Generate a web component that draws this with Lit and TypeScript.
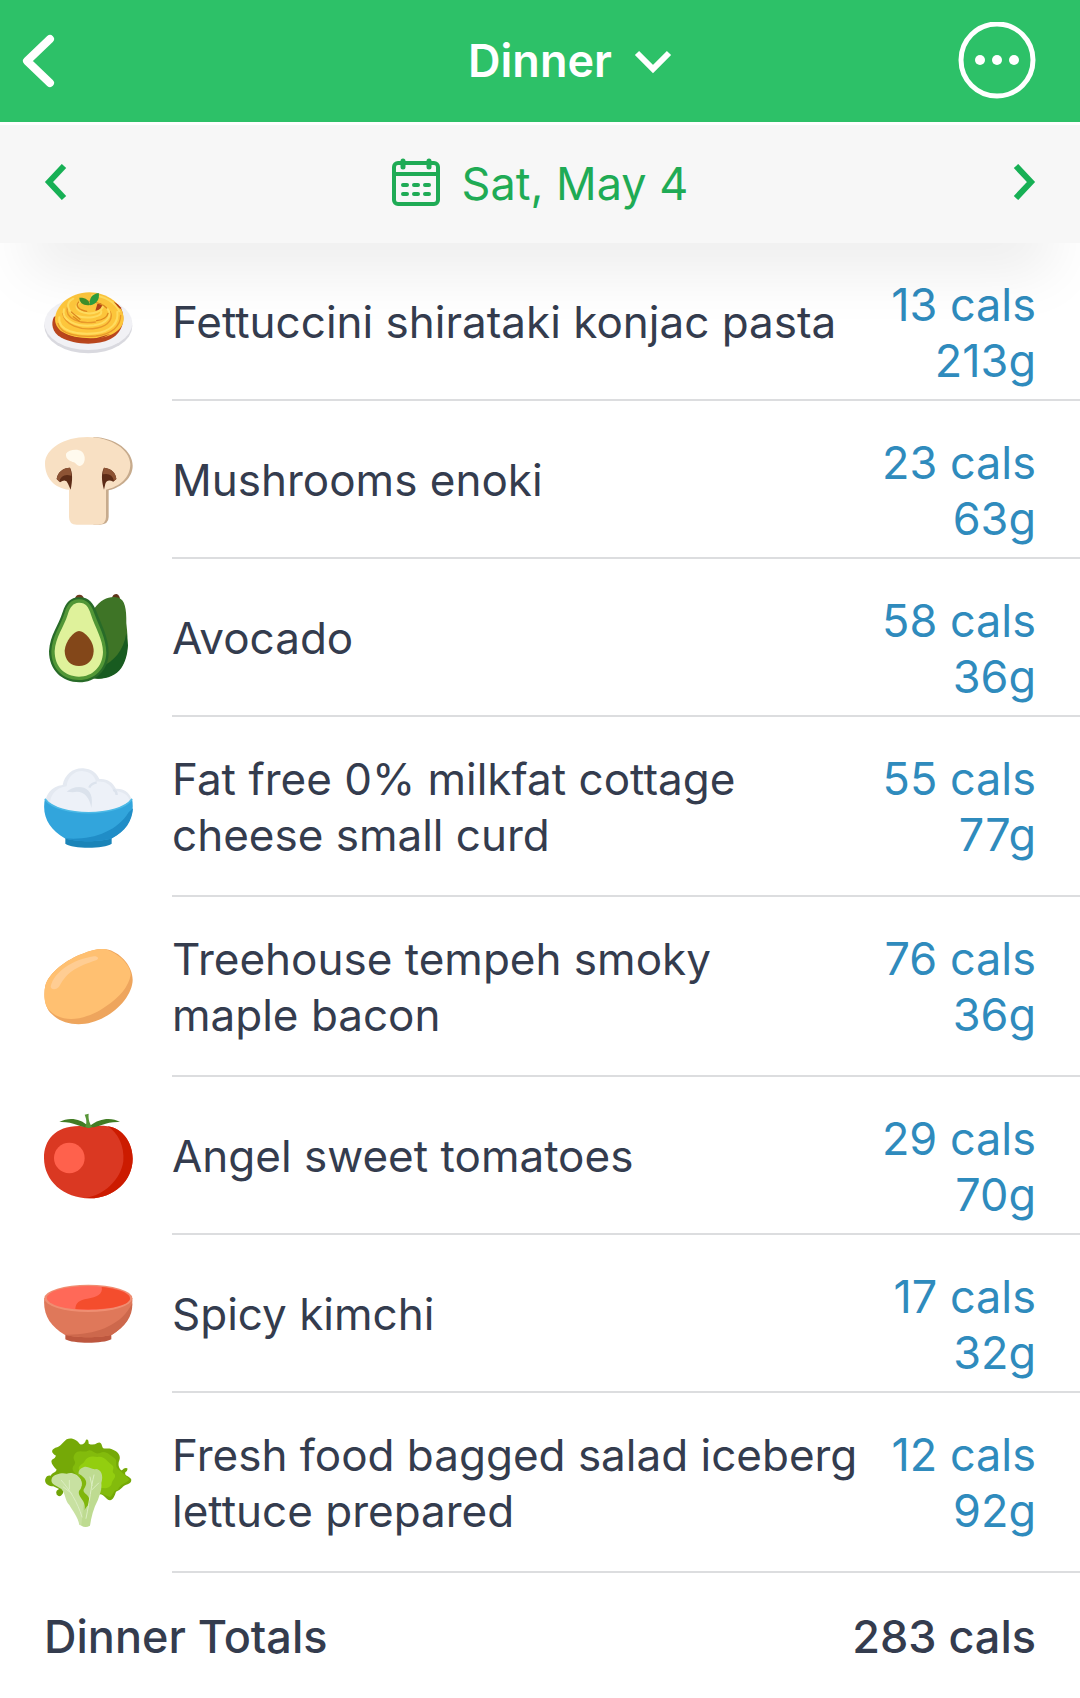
import { LitElement, html, svg, css } from "lit";
import type { SVGTemplateResult } from "lit";
import { customElement, state } from "lit/decorators.js";

interface Food {
  name: string;
  cals: number;
  grams: number;
  icon: Icon;
}

interface Icon {
  box: string;
  art: SVGTemplateResult;
}

const pasta: Icon = {
  box: "42 21 270 270",
  art: svg`
    <ellipse cx="175" cy="168" rx="132" ry="82" fill="#d9d9df"/>
    <ellipse cx="175" cy="160" rx="132" ry="80" fill="#f1f1f5"/>
    <path d="M72 140C62 160 66 186 92 202C130 224 200 228 240 208C276 190 290 150 272 112L250 92Z" fill="#b9461d"/>
    <path d="M75 148C76 108 118 68 178 67C232 67 282 104 281 148C280 182 238 206 180 207C116 206 76 184 75 148Z" fill="#fdc63c"/>
    <path d="M202 102Q214 96 217 106Q212 122 196 122ZM250 96Q266 100 274 118Q262 114 250 96ZM96 186Q136 208 200 204L240 192Q190 222 120 206Z" fill="#b3421b"/>
    <g fill="none" stroke-linecap="round">
      <path d="M84 160C92 194 146 202 198 198C246 192 272 168 272 136M98 130C104 164 150 184 202 174C240 166 250 142 240 124M112 112C104 146 150 164 196 156" stroke="#e9982a" stroke-width="4"/>
      <path d="M88 142C82 182 142 196 196 190C244 184 266 158 262 126M102 118C92 152 142 172 192 166C232 160 248 136 232 116M130 86C104 98 112 128 142 138C174 148 216 140 214 124M150 96C128 108 142 126 172 130C194 132 214 124 220 108M186 76C224 78 256 96 268 124" stroke="#ffdc5f" stroke-width="6"/>
      <path d="M124 126L150 148M130 140L148 154M146 96C134 108 148 120 170 124M200 152C220 150 232 140 234 130M160 92C190 94 216 100 230 114" stroke="#de8a20" stroke-width="4"/>
    </g>
    <path d="M180 105C160 108 148 98 148 83C166 82 178 90 180 105Z" fill="#3f8f2a"/>
    <path d="M180 106C176 86 186 72 206 69C210 88 200 102 180 106Z" fill="#2e9e3e"/>`,
};

const mushroom: Icon = {
  box: "42 30 270 270",
  art: svg`
    <path d="M190 36C258 38 308 78 308 122C308 158 276 186 236 196V276Q236 298 210 299H190Z" fill="#c7ab8d"/>
    <path d="M172 36C244 36 300 74 301 118C301 158 268 186 228 194V276Q228 299 204 299H140Q117 299 117 276V194C74 190 45 158 45 116C45 72 102 36 172 36Z" fill="#f8e0c3"/>
    <path d="M108 86C116 74 142 70 156 80C168 92 166 112 156 120C144 128 140 116 132 112C122 108 106 104 108 86Z" fill="#fffaee"/>
    <path d="M122 194C128 166 128 142 120 128C100 128 82 142 80 162L90 172Q108 160 114 176Z" fill="#5d2c17"/>
    <path d="M120 128C100 128 82 142 80 162L88 170Q94 144 124 152Q124 138 120 128Z" fill="#8d5334"/>
    <path d="M222 194C214 166 214 142 222 128C244 130 258 144 259 162L250 170Q232 160 226 176Z" fill="#5d2c17"/>
    <path d="M222 128C244 130 258 144 259 162L252 168Q246 142 219 148Q219 136 222 128Z" fill="#8d5334"/>`,
};

const avocado: Icon = {
  box: "42 39 270 270",
  art: svg`
    <path d="M246 54Q248 42 260 42Q270 46 270 60Z" fill="#5f3418"/>
    <path d="M194 84C214 56 242 46 266 53C284 60 290 84 289 130C296 188 294 224 278 254C260 286 222 300 190 295Z" fill="#3e7426"/>
    <path d="M294 196C292 226 286 246 274 264C256 290 222 300 190 295L212 262C252 244 280 214 289 160Z" fill="#185b20"/>
    <path d="M134 60Q136 43 150 44Q162 46 162 60Z" fill="#6e3b20"/>
    <path d="M146 52C174 50 190 68 200 96C214 134 236 172 236 218C236 270 196 307 148 307C96 307 57 270 57 214C60 164 86 136 98 96C108 66 122 53 146 52Z" fill="#286b28"/>
    <path d="M146 58C170 57 184 74 192 98C206 136 229 176 229 218C228 266 194 300 147 300C98 300 64 266 64 214C66 168 92 138 104 98C112 72 124 59 146 58Z" fill="#529736"/>
    <path d="M146 68C166 67 176 80 183 104C196 144 219 178 219 216C218 260 188 290 147 290C104 290 74 260 74 214C76 172 102 140 113 104C120 80 130 69 146 68Z" fill="#dff29b"/>
    <path d="M147 153C164 154 191 182 191 213C190 242 172 258 147 258C122 258 104 240 104 212C106 182 132 154 147 153Z" fill="#834719"/>`,
};

const cottageCheese: Icon = {
  box: "42 21 270 270",
  art: svg`
    <path d="M46 150C44 120 64 94 98 90C104 58 130 38 160 40C184 42 200 54 208 72C232 70 248 82 258 101C286 100 306 118 306 146L250 190H90Z" fill="#e4e9f1"/>
    <path d="M60 140C66 108 90 96 110 94C112 66 132 48 156 48C180 50 194 62 198 80C226 78 242 88 250 108C278 108 298 120 300 142L240 184H100Z" fill="#edf1f8"/>
    <path d="M110 110C124 98 144 92 162 98C182 106 190 126 184 158C178 126 160 104 128 112Z" fill="#dbe2ec"/>
    <path d="M200 82C184 86 180 92 178 98M250 104C258 108 260 114 260 120" fill="none" stroke="#dce3ed" stroke-width="7"/>
    <path d="M106 244H245V266C222 282 128 282 106 266Z" fill="#1b84b8"/>
    <path d="M45 130C84 188 268 188 306 130C316 184 292 222 246 250C212 262 138 262 104 250C58 222 34 184 45 130Z" fill="#32a5dc"/>
    <path d="M309 160C306 200 286 230 246 250C212 262 138 262 104 250C180 258 260 232 296 172Z" fill="#208dc7"/>
    <path d="M45 132C84 187 268 187 306 132" fill="none" stroke="#4bb9e6" stroke-width="5"/>`,
};

const tempeh: Icon = {
  box: "42 21 270 270",
  art: svg`
    <path d="M236 44C276 56 308 96 308 134C308 174 270 222 224 246C172 276 106 276 66 238C44 220 40 180 46 152C56 112 112 72 158 56C188 44 214 38 236 44Z" fill="#eea55d"/>
    <path d="M228 43C268 56 304 94 302 120C296 154 270 186 228 214C176 252 100 270 58 226C42 210 40 176 46 152C56 112 112 72 158 56C186 44 208 40 228 43Z" fill="#ffc071"/>
    <path d="M62 154C72 112 126 74 192 64C206 64 208 72 198 76C146 94 114 106 88 154C80 166 62 166 62 154Z" fill="#ffcd93"/>`,
};

const tomato: Icon = {
  box: "42 33 270 270",
  art: svg`
    <path d="M175 80C212 74 248 76 268 92C294 110 308 144 308 176C308 242 252 294 180 295C100 295 42 242 42 174C42 116 82 68 175 80Z" fill="#da3822"/>
    <path d="M232 78C282 86 308 132 308 176C308 242 252 294 180 295L166 294C222 286 272 240 280 184C284 138 264 98 232 78Z" fill="#cc1b00"/>
    <circle cx="118" cy="174" r="46" fill="#ff614c"/>
    <path d="M88 66C116 50 152 56 172 76Q188 86 172 82C150 82 130 64 88 66ZM270 66C244 50 206 56 182 76Q170 86 184 82C208 82 226 64 270 66Z" fill="#427c24"/>
    <path d="M164 44L176 41C174 58 180 72 186 80Q176 88 166 80C172 66 168 54 164 44Z" fill="#579537"/>`,
};

const kimchi: Icon = {
  box: "42 -3 270 270",
  art: svg`
    <path d="M106 188H244V208C220 222 128 222 106 208Z" fill="#bd573f"/>
    <path d="M43 84H307C310 132 286 170 246 194C210 204 138 204 104 194C60 168 38 132 43 84Z" fill="#df785a"/>
    <path d="M307 100C308 140 286 170 246 194C210 204 138 204 104 194C188 196 264 172 300 112Z" fill="#cd684c"/>
    <ellipse cx="175" cy="85" rx="132" ry="41" fill="#ef8e72"/>
    <ellipse cx="175" cy="84" rx="125" ry="36" fill="#ff6958"/>
    <path d="M215 51C264 56 304 70 300 88C292 112 214 122 136 117C136 98 148 90 172 86C200 82 220 72 215 51Z" fill="#f44d2d"/>`,
};

const lettuce: Icon = {
  box: "42 39 270 270",
  art: svg`
    <path d="M76 68C92 66 98 52 110 43C126 36 142 46 150 58Q164 60 168 44Q176 40 176 56Q190 62 202 54Q212 48 216 62C218 76 230 68 244 72C260 78 274 88 268 106C262 118 268 134 276 136Q284 126 292 130Q294 138 286 142C282 154 300 152 304 164C304 180 284 176 276 188Q268 196 258 200C254 212 250 224 240 226C228 226 224 208 210 208L150 222L70 184C56 184 42 176 46 162Q50 150 62 152C66 142 76 144 80 134C70 124 60 112 66 104Q76 100 78 92C66 86 60 76 76 68Z" fill="#75a907"/>
    <path d="M134 88C146 70 160 84 172 78C188 70 190 90 210 84C228 74 240 92 252 98C266 108 252 120 264 132C276 142 292 156 298 164C288 176 270 176 264 194C250 194 248 212 240 216L208 204L150 160C136 144 118 136 134 118C140 108 124 104 134 88Z" fill="#83bb0c"/>
    <path d="M162 112C172 92 190 94 202 96C222 90 234 112 246 120C258 130 240 138 254 148C260 160 246 162 244 180C232 196 218 186 208 190L176 150L148 136C142 124 154 120 162 112Z" fill="#93ce0f"/>
    <path d="M92 190Q106 192 98 206Q88 220 80 208Q74 196 92 190Z" fill="#6fa307"/>
    <path d="M66 158C74 146 98 142 110 146C126 140 142 148 150 160C168 180 142 196 158 206C174 216 182 238 172 254L170 305L148 300C144 276 128 258 118 240C104 226 108 208 94 192C80 180 58 180 66 158Z" fill="#c8e1a1"/>
    <path d="M162 126C176 122 186 136 198 132C216 134 220 154 214 174C216 196 210 206 204 224C190 250 184 276 180 302Q166 310 154 302L160 240C176 222 150 206 158 194C172 176 158 162 146 148C144 136 152 130 162 126Z" fill="#bedb91"/>
    <path d="M146 146C168 158 174 172 164 188C152 204 174 204 178 222C182 240 168 242 164 256C170 224 142 218 147 198C160 184 158 168 146 146Z" fill="#80b60c"/>
    <path d="M94 166C120 196 142 230 156 276M118 166V192M100 186L126 206M192 150C182 190 180 224 168 280M180 156L186 182M206 174L186 194" fill="none" stroke="#dceec2" stroke-width="3" stroke-linecap="round"/>`,
};

const FOODS: Food[] = [
  { name: "Fettuccini shirataki konjac pasta", cals: 13, grams: 213, icon: pasta },
  { name: "Mushrooms enoki", cals: 23, grams: 63, icon: mushroom },
  { name: "Avocado", cals: 58, grams: 36, icon: avocado },
  { name: "Fat free 0% milkfat cottage\ncheese small curd", cals: 55, grams: 77, icon: cottageCheese },
  { name: "Treehouse tempeh smoky\nmaple bacon", cals: 76, grams: 36, icon: tempeh },
  { name: "Angel sweet tomatoes", cals: 29, grams: 70, icon: tomato },
  { name: "Spicy kimchi", cals: 17, grams: 32, icon: kimchi },
  { name: "Fresh food bagged salad iceberg\nlettuce prepared", cals: 12, grams: 92, icon: lettuce },
];

@customElement("food-row")
export class FoodRow extends LitElement {
  static properties = { food: { attribute: false } };
  declare food: Food;

  static styles = css`
    :host {
      display: flex;
      gap: 38px;
      padding-left: 44px;
    }
    .icon {
      flex: none;
      align-self: center;
      width: 90px;
      height: 90px;
    }
    .body {
      flex: 1;
      min-width: 0;
      display: flex;
      justify-content: space-between;
      border-bottom: 2px solid #dcdddf;
      line-height: 56px;
    }
    .name {
      align-self: center;
      padding: 34px 0 32px;
      font-size: 44px;
      white-space: pre-line;
    }
    .amount {
      flex: none;
      padding: 34px 44px 10px 0;
      color: #2f8bbd;
      text-align: right;
    }
    .line {
      display: block;
    }
  `;

  render() {
    const { name, cals, grams, icon } = this.food;
    return html`
      <svg class="icon" viewBox=${icon.box} aria-hidden="true">${icon.art}</svg>
      <div class="body">
        <span class="name">${name}</span>
        <span class="amount">
          <span class="line">${cals} cals</span>
          <span class="line">${grams}g</span>
        </span>
      </div>
    `;
  }
}

@customElement("app-root")
export class AppRoot extends LitElement {
  @state() private foods: Food[] = FOODS;

  static styles = css`
    :host {
      display: block;
      background: #fff;
      color: #343c4e;
      font: 400 45px/56px Inter, "Liberation Sans", sans-serif;
    }
    button {
      display: flex;
      align-items: center;
      margin: 0;
      padding: 0;
      border: 0;
      background: none;
      color: inherit;
      font: inherit;
      cursor: pointer;
    }
    svg {
      display: block;
      fill: none;
      stroke: currentColor;
    }
    h1 {
      margin: 0;
      font: inherit;
    }
    .top {
      display: grid;
      grid-template-columns: 1fr auto 1fr;
      align-items: center;
      height: 122px;
      padding: 0 44px 0 20px;
      background: #2dc168;
      color: #fff;
    }
    .meal {
      gap: 22px;
      padding-left: 84px;
      font-weight: 600;
    }
    .end {
      justify-self: end;
    }
    .dates {
      position: relative;
      display: flex;
      align-items: center;
      justify-content: space-between;
      height: 118px;
      padding: 0 44px;
      border-top: 3px solid #fff;
      background: #f7f7f7;
      color: #17b055;
      box-shadow: 0 56px 60px -28px rgba(0, 0, 0, 0.08);
    }
    .dates svg {
      margin-bottom: 4px;
    }
    .day {
      gap: 22px;
      color: #1fab55;
    }
    .foods {
      margin: 0;
      padding: 0;
      list-style: none;
    }
    .totals {
      display: flex;
      justify-content: space-between;
      padding: 36px 44px 33px;
      font-weight: 500;
    }
  `;

  render() {
    const total = this.foods.reduce((sum, food) => sum + food.cals, 0);
    return html`
      <header class="top">
        <button aria-label="Back">
          <svg width="38" height="56" viewBox="0 0 38 56" stroke-width="8" stroke-linecap="round" stroke-linejoin="round">
            <path d="M30 6L7 28L30 50"/>
          </svg>
        </button>
        <h1>
          <button class="meal">
            Dinner
            <svg width="38" height="26" viewBox="0 0 38 26" stroke-width="6">
              <path d="M3 5L19 21L35 5"/>
            </svg>
          </button>
        </h1>
        <button class="end" aria-label="More options">
          <svg width="78" height="78" viewBox="0 0 78 78">
            <circle cx="39" cy="38" r="36" stroke-width="5"/>
            <g fill="currentColor" stroke="none">
              <circle cx="22" cy="38" r="5"/>
              <circle cx="39" cy="38" r="5"/>
              <circle cx="56" cy="38" r="5"/>
            </g>
          </svg>
        </button>
      </header>
      <nav class="dates">
        <button aria-label="Previous day">
          <svg width="24" height="36" viewBox="0 0 24 36" stroke-width="6">
            <path d="M20 2L5 18L20 34"/>
          </svg>
        </button>
        <button class="day">
          <svg width="48" height="48" viewBox="0 0 48 48" stroke-width="4">
            <rect x="2" y="5" width="44" height="41" rx="4"/>
            <path d="M2 16H46"/>
            <path d="M11 3V9M37 3V9" stroke-width="5" stroke-linecap="round"/>
            <path d="M11 27H15M22 27H26M33 27H37M11 36H15M22 36H26M33 36H37" stroke-linecap="round"/>
          </svg>
          Sat, May 4
        </button>
        <button aria-label="Next day">
          <svg width="24" height="36" viewBox="0 0 24 36" stroke-width="6">
            <path d="M4 2L19 18L4 34"/>
          </svg>
        </button>
      </nav>
      <main>
        <ul class="foods">
          ${this.foods.map((food) => html`<li><food-row .food=${food}></food-row></li>`)}
        </ul>
        <div class="totals">
          <span>Dinner Totals</span>
          <span>${total} cals</span>
        </div>
      </main>
    `;
  }
}
